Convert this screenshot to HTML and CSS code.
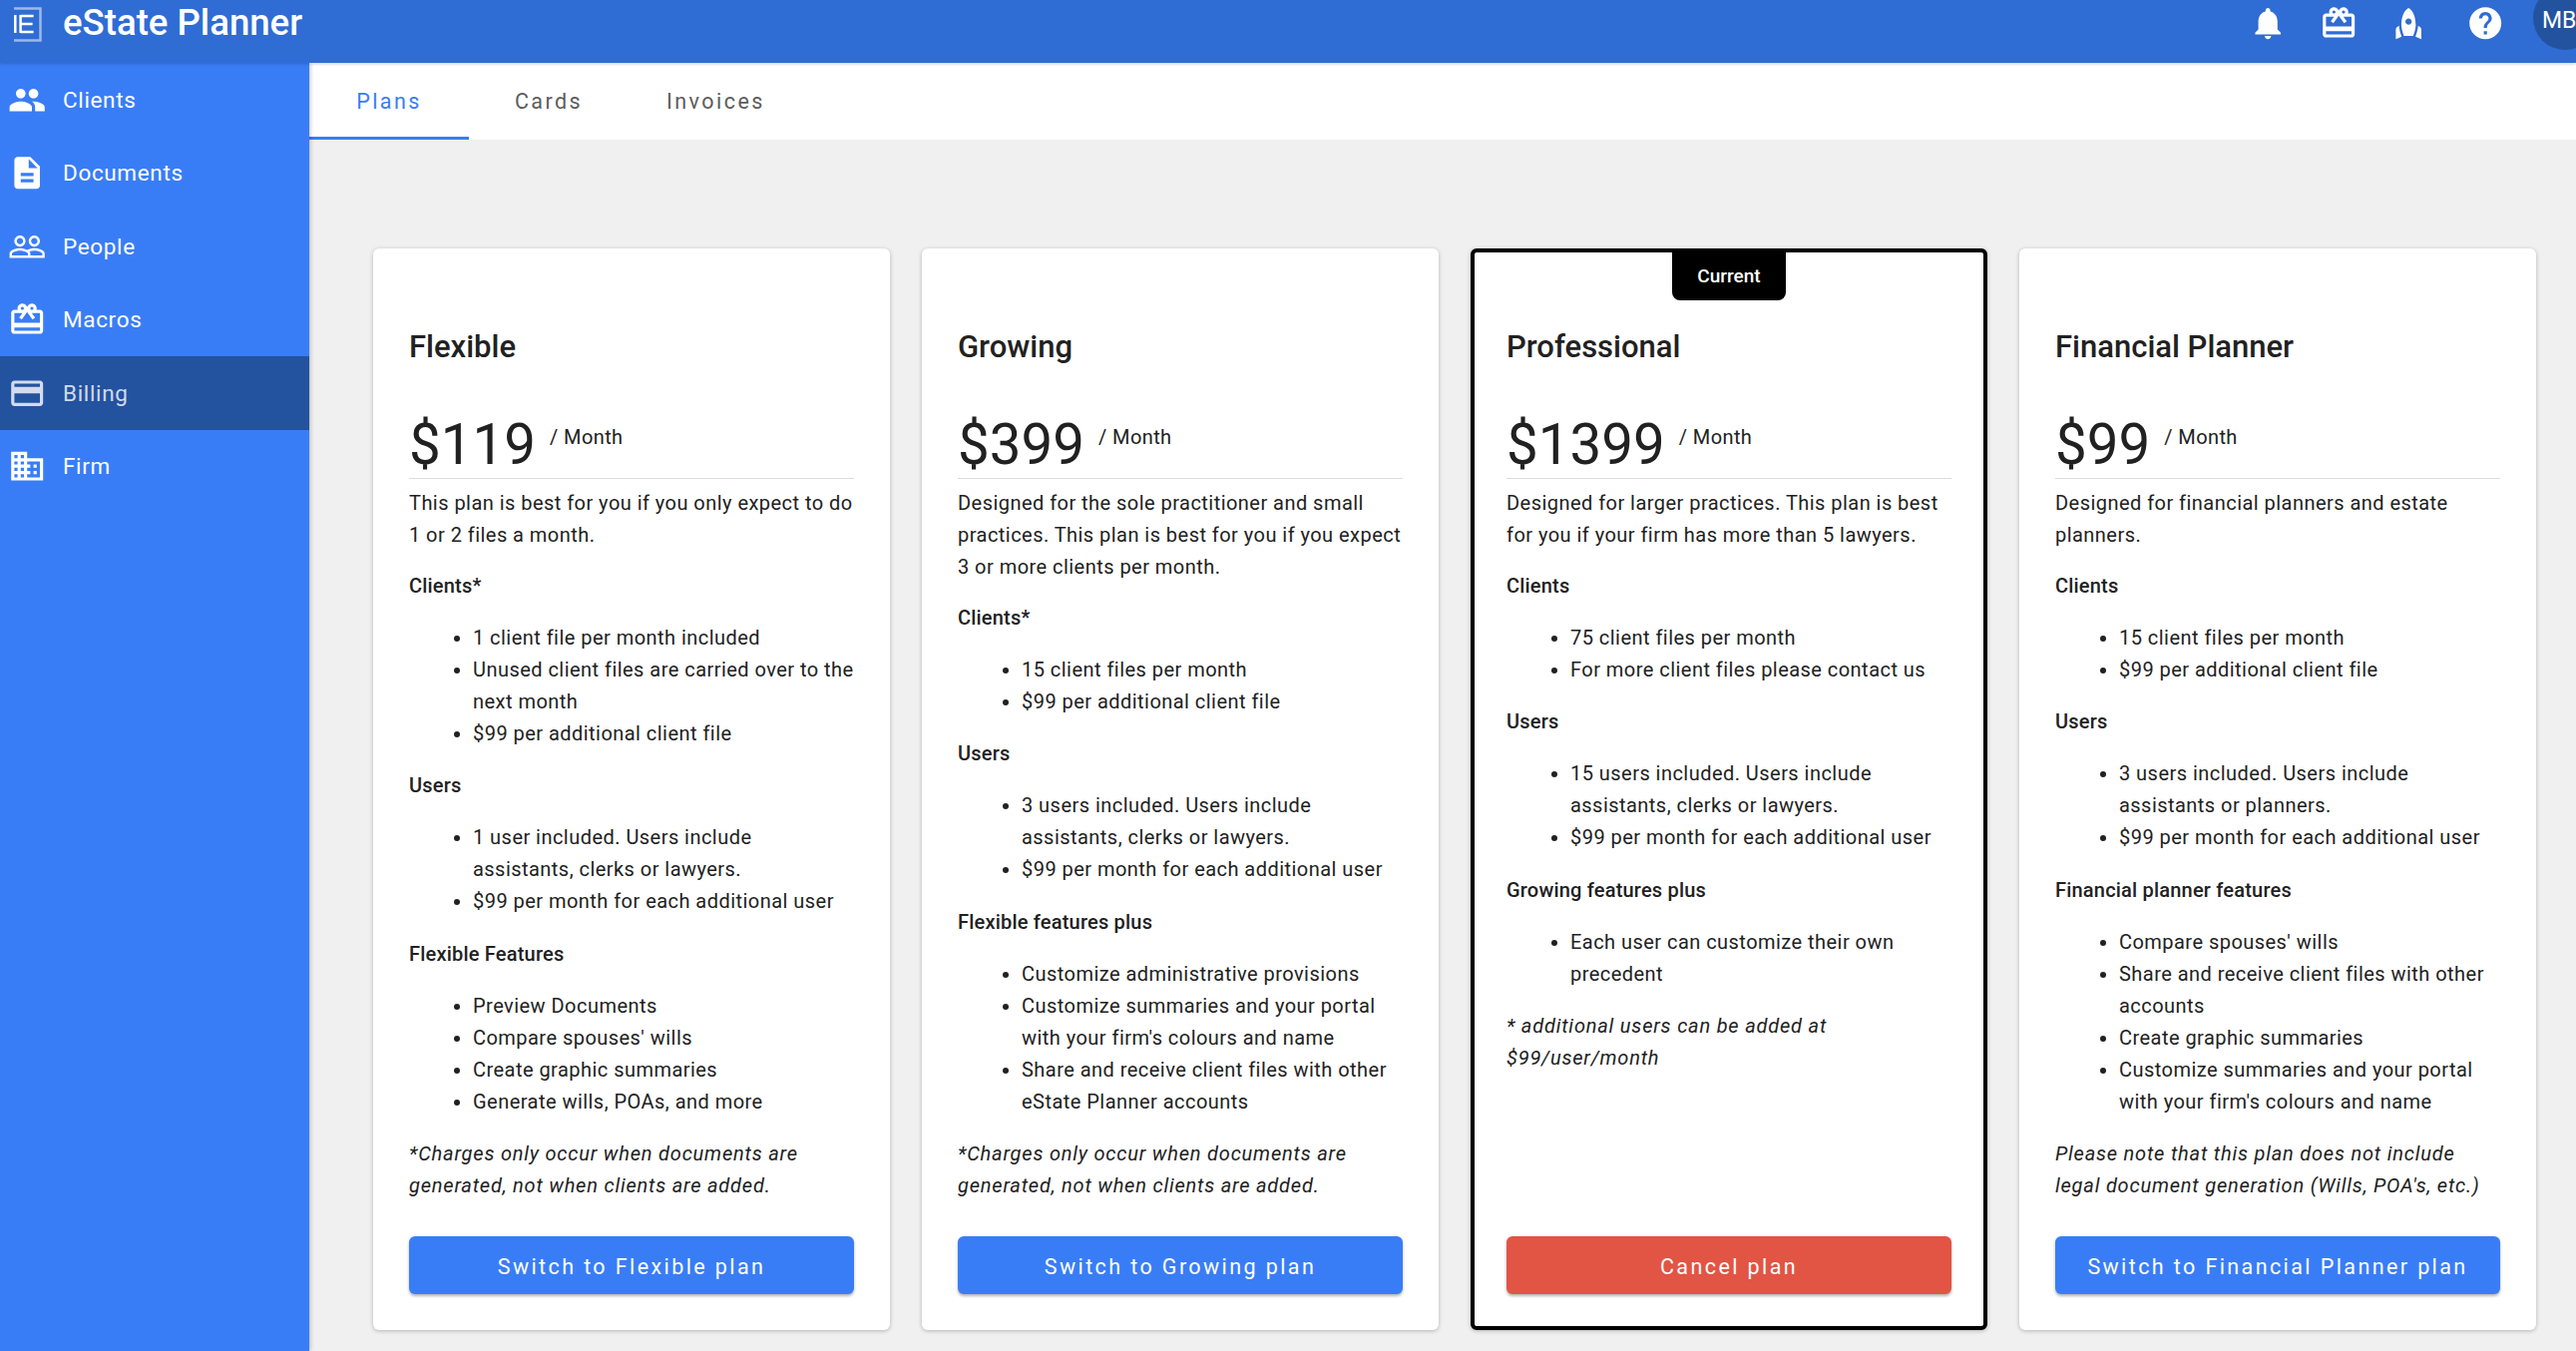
FILE: index.html
```html
<!DOCTYPE html>
<html lang="en">
<head>
    <meta charset="UTF-8">
    <title>eState Planner - Billing</title>
    <link rel="stylesheet" href="styles.css">
</head>
<body>
    <header class="topbar">
        <svg class="logo" viewBox="0 0 28 35">
            <path class="logo-back" d="M0 1.500h26.500v32H0" />
            <path class="logo-front" d="M1.300 8v18M6.600 8v18M6.600 9h13M6.600 17h12M6.600 25h13" />
        </svg>
        <div class="brand">eState Planner</div>
        <div class="topbar-icons">
            <svg class="icon" viewBox="0 0 24 24"><path d="M12 22c1.100 0 2-.9 2-2h-4c0 1.100.89 2 2 2zm6-6v-5c0-3.070-1.640-5.640-4.500-6.320V4c0-.83-.67-1.500-1.500-1.500s-1.500.67-1.500 1.500v.68C7.630 5.360 6 7.920 6 11v5l-2 2v1h16v-1l-2-2z"/></svg>
            <svg class="icon" viewBox="0 0 24 24"><path d="M20 6h-2.180c.11-.31.18-.65.18-1 0-1.660-1.340-3-3-3-1.050 0-1.960.54-2.500 1.350l-.5.67-.5-.68C10.960 2.540 10.050 2 9 2 7.340 2 6 3.340 6 5c0 .35.07.69.18 1H4c-1.110 0-1.990.89-1.990 2L2 19c0 1.110.89 2 2 2h16c1.110 0 2-.89 2-2V8c0-1.110-.89-2-2-2zm-5-2c.55 0 1 .45 1 1s-.45 1-1 1-1-.45-1-1 .45-1 1-1zM9 4c.55 0 1 .45 1 1s-.45 1-1 1-1-.45-1-1 .45-1 1-1zm11 15H4v-2h16v2zm0-5H4V8h5.080L7 10.830 8.620 12 11 8.760l1-1.360 1 1.360L15.380 12 17 10.830 14.920 8H20v6z"/></svg>
            <svg class="icon" viewBox="0 0 24 24"><path d="M12 2.500s4.500 2.040 4.500 10.500c0 2.490-1.040 5.570-1.600 7H9.100c-.56-1.430-1.600-4.510-1.600-7C7.500 4.540 12 2.500 12 2.500zm2 8.500c0-1.100-.9-2-2-2s-2 .9-2 2 .9 2 2 2 2-.9 2-2zm-6.310 9.520c-.48-1.230-1.520-4.170-1.670-6.870l-1.130.75c-.56.38-.89 1-.89 1.670V22l3.690-1.480zM20 22v-5.930c0-.67-.33-1.290-.89-1.660l-1.130-.75c-.15 2.690-1.200 5.640-1.670 6.870L20 22z"/></svg>
            <svg class="icon icon-help" viewBox="0 0 24 24"><path d="M12 2C6.480 2 2 6.480 2 12s4.480 10 10 10 10-4.480 10-10S17.520 2 12 2zm1 17h-2v-2h2v2zm2.070-7.750l-.9.92C13.450 12.900 13 13.500 13 15h-2v-.5c0-1.100.45-2.100 1.170-2.830l1.240-1.260c.37-.36.59-.86.59-1.410 0-1.100-.9-2-2-2s-2 .9-2 2H8c0-2.210 1.790-4 4-4s4 1.790 4 4c0 .88-.36 1.680-.93 2.250z"/></svg>
            <div class="avatar">MB</div>
        </div>
    </header>

    <div class="layout">
        <nav class="sidebar">
            <a class="nav-item">
                <svg class="icon" viewBox="0 0 24 24"><path d="M16 11c1.660 0 2.990-1.340 2.990-3S17.660 5 16 5c-1.660 0-3 1.340-3 3s1.340 3 3 3zm-8 0c1.660 0 2.990-1.340 2.990-3S9.660 5 8 5C6.340 5 5 6.340 5 8s1.340 3 3 3zm0 2c-2.330 0-7 1.170-7 3.500V19h14v-2.500c0-2.330-4.670-3.500-7-3.500zm8 0c-.29 0-.62.02-.97.05 1.160.84 1.970 1.970 1.970 3.450V19h6v-2.500c0-2.330-4.670-3.500-7-3.500z"/></svg>
                Clients
            </a>
            <a class="nav-item">
                <svg class="icon" viewBox="0 0 24 24"><path d="M14 2H6c-1.100 0-1.990.9-1.990 2L4 20c0 1.100.89 2 1.990 2H18c1.100 0 2-.9 2-2V8l-6-6zm2 16H8v-2h8v2zm0-4H8v-2h8v2zm-3-5V3.500L18.500 9H13z"/></svg>
                Documents
            </a>
            <a class="nav-item">
                <svg class="icon" viewBox="0 0 24 24"><path d="M16.500 13c-1.200 0-3.070.34-4.500 1-1.430-.67-3.300-1-4.500-1C5.330 13 1 14.080 1 16.250V19h22v-2.750c0-2.170-4.330-3.250-6.500-3.250zm-4 4.500h-10v-1.250c0-.54 2.560-1.750 5-1.750s5 1.210 5 1.750v1.250zm9 0H14v-1.250c0-.46-.2-.86-.52-1.220.88-.3 1.960-.53 3.020-.53 2.440 0 5 1.210 5 1.750v1.250zM7.500 12c1.930 0 3.500-1.570 3.500-3.500S9.430 5 7.500 5 4 6.570 4 8.500 5.570 12 7.500 12zm0-5.500c1.100 0 2 .9 2 2s-.9 2-2 2-2-.9-2-2 .9-2 2-2zm9 5.500c1.930 0 3.500-1.570 3.500-3.500S18.430 5 16.500 5 13 6.570 13 8.500s1.570 3.500 3.500 3.500zm0-5.500c1.100 0 2 .9 2 2s-.9 2-2 2-2-.9-2-2 .9-2 2-2z"/></svg>
                People
            </a>
            <a class="nav-item">
                <svg class="icon" viewBox="0 0 24 24"><path d="M20 6h-2.180c.11-.31.18-.65.18-1 0-1.660-1.340-3-3-3-1.050 0-1.960.54-2.500 1.350l-.5.67-.5-.68C10.960 2.540 10.050 2 9 2 7.340 2 6 3.340 6 5c0 .35.07.69.18 1H4c-1.110 0-1.990.89-1.990 2L2 19c0 1.110.89 2 2 2h16c1.110 0 2-.89 2-2V8c0-1.110-.89-2-2-2zm-5-2c.55 0 1 .45 1 1s-.45 1-1 1-1-.45-1-1 .45-1 1-1zM9 4c.55 0 1 .45 1 1s-.45 1-1 1-1-.45-1-1 .45-1 1-1zm11 15H4v-2h16v2zm0-5H4V8h5.080L7 10.830 8.620 12 11 8.760l1-1.360 1 1.360L15.380 12 17 10.830 14.920 8H20v6z"/></svg>
                Macros
            </a>
            <a class="nav-item active">
                <svg class="icon" viewBox="0 0 24 24"><path d="M20 4H4c-1.110 0-1.990.89-1.990 2L2 18c0 1.110.89 2 2 2h16c1.110 0 2-.89 2-2V6c0-1.110-.89-2-2-2zm0 14H4v-6h16v6zm0-10H4V6h16v2z"/></svg>
                Billing
            </a>
            <a class="nav-item">
                <svg class="icon" viewBox="0 0 24 24"><path d="M12 7V3H2v18h20V7H12zM6 19H4v-2h2v2zm0-4H4v-2h2v2zm0-4H4V9h2v2zm0-4H4V5h2v2zm4 12H8v-2h2v2zm0-4H8v-2h2v2zm0-4H8V9h2v2zm0-4H8V5h2v2zm10 12h-8v-2h2v-2h-2v-2h2v-2h-2V9h8v10zm-2-8h-2v2h2v-2zm0 4h-2v2h2v-2z"/></svg>
                Firm
            </a>
        </nav>

        <main class="content">
            <div class="tabs">
                <div class="tab selected">Plans</div>
                <div class="tab">Cards</div>
                <div class="tab">Invoices</div>
            </div>

            <div class="plans">
                <section class="plan">
                    <h2>Flexible</h2>
                    <div class="price"><span class="amount">$119</span><span class="period">/ Month</span></div>
                    <p class="desc">This plan is best for you if you only expect to do 1 or 2 files a month.</p>
                    <h3>Clients*</h3>
                    <ul>
                        <li>1 client file per month included</li>
                        <li>Unused client files are carried over to the next month</li>
                        <li>$99 per additional client file</li>
                    </ul>
                    <h3>Users</h3>
                    <ul>
                        <li>1 user included. Users include assistants, clerks or lawyers.</li>
                        <li>$99 per month for each additional user</li>
                    </ul>
                    <h3>Flexible Features</h3>
                    <ul>
                        <li>Preview Documents</li>
                        <li>Compare spouses' wills</li>
                        <li>Create graphic summaries</li>
                        <li>Generate wills, POAs, and more</li>
                    </ul>
                    <p class="note">*Charges only occur when documents are generated, not when clients are added.</p>
                    <button class="plan-btn">Switch to Flexible plan</button>
                </section>

                <section class="plan">
                    <h2>Growing</h2>
                    <div class="price"><span class="amount">$399</span><span class="period">/ Month</span></div>
                    <p class="desc">Designed for the sole practitioner and small practices. This plan is best for you if you expect 3 or more clients per month.</p>
                    <h3>Clients*</h3>
                    <ul>
                        <li>15 client files per month</li>
                        <li>$99 per additional client file</li>
                    </ul>
                    <h3>Users</h3>
                    <ul>
                        <li>3 users included. Users include assistants, clerks or lawyers.</li>
                        <li>$99 per month for each additional user</li>
                    </ul>
                    <h3>Flexible features plus</h3>
                    <ul>
                        <li>Customize administrative provisions</li>
                        <li>Customize summaries and your portal with your firm's colours and name</li>
                        <li>Share and receive client files with other eState Planner accounts</li>
                    </ul>
                    <p class="note">*Charges only occur when documents are generated, not when clients are added.</p>
                    <button class="plan-btn">Switch to Growing plan</button>
                </section>

                <section class="plan current">
                    <div class="badge">Current</div>
                    <h2>Professional</h2>
                    <div class="price"><span class="amount">$1399</span><span class="period">/ Month</span></div>
                    <p class="desc">Designed for larger practices. This plan is best for you if your firm has more than 5 lawyers.</p>
                    <h3>Clients</h3>
                    <ul>
                        <li>75 client files per month</li>
                        <li>For more client files please contact us</li>
                    </ul>
                    <h3>Users</h3>
                    <ul>
                        <li>15 users included. Users include assistants, clerks or lawyers.</li>
                        <li>$99 per month for each additional user</li>
                    </ul>
                    <h3>Growing features plus</h3>
                    <ul>
                        <li>Each user can customize their own precedent</li>
                    </ul>
                    <p class="note">* additional users can be added at $99/user/month</p>
                    <button class="plan-btn cancel">Cancel plan</button>
                </section>

                <section class="plan">
                    <h2>Financial Planner</h2>
                    <div class="price"><span class="amount">$99</span><span class="period">/ Month</span></div>
                    <p class="desc">Designed for financial planners and estate planners.</p>
                    <h3>Clients</h3>
                    <ul>
                        <li>15 client files per month</li>
                        <li>$99 per additional client file</li>
                    </ul>
                    <h3>Users</h3>
                    <ul>
                        <li>3 users included. Users include assistants or planners.</li>
                        <li>$99 per month for each additional user</li>
                    </ul>
                    <h3>Financial planner features</h3>
                    <ul>
                        <li>Compare spouses' wills</li>
                        <li>Share and receive client files with other accounts</li>
                        <li>Create graphic summaries</li>
                        <li>Customize summaries and your portal with your firm's colours and name</li>
                    </ul>
                    <p class="note">Please note that this plan does not include legal document generation (Wills, POA's, etc.)</p>
                    <button class="plan-btn">Switch to Financial Planner plan</button>
                </section>
            </div>
        </main>
    </div>
</body>
</html>
```

FILE: styles.css
```css
* {
    box-sizing: border-box;
}
html, body {
    height: 100%;
}
body {
    margin: 0;
    font-family: Roboto, "Liberation Sans", sans-serif;
    font-size: 20px;
    color: #212121;
    background-color: #f0f0f0;
    overflow: hidden;
}

/* top bar */
.topbar {
    position: relative;
    z-index: 2;
    display: flex;
    align-items: flex-start;
    height: 63px;
    padding-left: 14px;
    background-color: #2f6cd4;
    box-shadow: 0 1px 3px rgba(0, 0, 0, 0.2);
    color: #fff;
    overflow: hidden;
}
.logo {
    width: 28px;
    height: 35px;
    margin-top: 7px;
    fill: none;
}
.logo-back {
    stroke: #9db9ea;
    stroke-width: 2.5;
}
.logo-front {
    stroke: #fff;
    stroke-width: 2.5;
}
.brand {
    margin-left: 21px;
    font-size: 36.6px;
    font-weight: 500;
    line-height: 46px;
}
.topbar-icons {
    display: flex;
    align-items: flex-start;
    gap: 32px;
    margin-left: auto;
    margin-right: -21px;
}
.icon {
    flex: none;
    width: 38.4px;
    height: 38.4px;
    fill: currentColor;
}
.topbar-icons .icon {
    margin-top: 4px;
}
.topbar-icons .icon-help {
    margin-left: 6px;
}
.avatar {
    width: 64px;
    height: 64px;
    margin-top: -14px;
    margin-left: -3px;
    padding-top: 19px;
    padding-left: 9px;
    border-radius: 50%;
    background-color: #23529f;
    font-size: 23px;
    line-height: 32px;
}

/* page layout */
.layout {
    display: flex;
    height: calc(100% - 63px);
}
.sidebar {
    position: relative;
    z-index: 1;
    flex: none;
    width: 310px;
    background-color: #397df6;
    box-shadow: 1px 0 4px rgba(0, 0, 0, 0.25);
    color: #fff;
}
.nav-item {
    display: flex;
    align-items: center;
    gap: 17px;
    height: 73.5px;
    padding-left: 7.6px;
    font-size: 22.5px;
    letter-spacing: 0.65px;
    line-height: 24px;
}
.nav-item.active {
    background-color: #23529f;
    color: rgba(255, 255, 255, 0.8);
}
.content {
    flex: 1;
    min-width: 0;
}

/* tabs */
.tabs {
    display: flex;
    height: 77px;
    background-color: #fff;
}
.tab {
    min-width: 160px;
    padding: 27px 38px 0;
    font-size: 21.5px;
    line-height: 24px;
    letter-spacing: 2.45px;
    text-align: center;
    color: #5c5c5c;
}
.tab.selected {
    border-bottom: 3px solid #397df6;
    color: #397df6;
}

/* plan cards */
.plans {
    display: grid;
    grid-template-columns: repeat(4, 518px);
    gap: 32px;
    padding: 109px 0 0 64px;
}
.plan {
    position: relative;
    display: flex;
    flex-direction: column;
    padding: 80px 36px 36px;
    border-radius: 6px;
    background-color: #fff;
    box-shadow: 0 1px 4px rgba(0, 0, 0, 0.25);
}
.plan.current {
    padding: 76px 32px 32px;
    border: 4px solid #000;
}
.badge {
    position: absolute;
    top: 0;
    left: 50%;
    width: 114px;
    height: 48px;
    margin-left: -57px;
    border-radius: 0 0 8px 8px;
    background-color: #000;
    color: #fff;
    font-size: 19px;
    font-weight: 500;
    line-height: 48px;
    text-align: center;
}
.plan h2 {
    margin: 0 0 46px;
    font-size: 31px;
    font-weight: 500;
    line-height: 38px;
}
.price {
    display: flex;
    align-items: flex-start;
    border-bottom: 1px solid #dcdcdc;
}
.amount {
    font-size: 56.5px;
    line-height: 66px;
}
.period {
    margin-top: 13px;
    margin-left: 14px;
    font-size: 20px;
    line-height: 24px;
    letter-spacing: 0.4px;
}
.plan p,
.plan li {
    font-size: 20px;
    line-height: 32px;
    letter-spacing: 0.46px;
}
.plan .desc {
    margin: 8px 0 19px;
}
.plan h3 {
    margin: 0;
    font-size: 20px;
    font-weight: 500;
    line-height: 32px;
    letter-spacing: 0.2px;
}
.plan ul {
    margin: 20px 0 20.4px;
    padding-left: 64px;
}
.plan .note {
    margin: 0 0 35px;
    font-style: italic;
    letter-spacing: 0.8px;
}
.plan-btn {
    height: 58px;
    margin-top: auto;
    padding-top: 3px;
    border: 0;
    border-radius: 6px;
    background-color: #397df6;
    box-shadow: 0 2px 3px rgba(0, 0, 0, 0.3);
    color: #fff;
    font-family: inherit;
    font-size: 21.5px;
    letter-spacing: 2.4px;
}
.plan-btn.cancel {
    background-color: #e25443;
}
```
